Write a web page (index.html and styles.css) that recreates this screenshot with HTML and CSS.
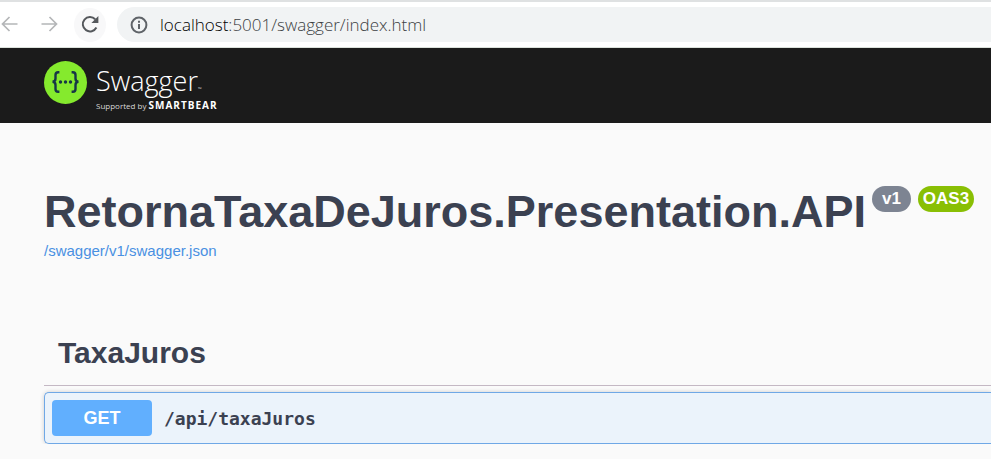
FILE: index.html
```html
<!DOCTYPE html>
<html lang="en">
<head>
<meta charset="utf-8">
<meta name="viewport" content="width=device-width, initial-scale=1">
<title>Swagger UI</title>
<link rel="stylesheet" href="styles.css">
</head>
<body>
<div class="browser-bar">
  <button class="nav-button" type="button" aria-label="Back">
    <svg width="20" height="20" viewBox="0 0 20 20" fill="none" stroke="#b4b6b8" stroke-width="1.7"><path d="M17.500 9H3M9.500 2L2.500 9l7 7"/></svg>
  </button>
  <button class="nav-button" type="button" aria-label="Forward">
    <svg width="20" height="20" viewBox="0 0 20 20" fill="none" stroke="#b4b6b8" stroke-width="1.7"><path d="M1.500 9H16M9.500 2l7 7-7 7"/></svg>
  </button>
  <button class="nav-button reload" type="button" aria-label="Reload">
    <svg width="20" height="20" viewBox="0 0 20 20"><path d="M16.400 12.500A7.200 7.200 0 1 1 15.200 4.200" fill="none" stroke="#55585c" stroke-width="2"/><path d="M18.400 1v7h-7z" fill="#55585c"/></svg>
  </button>
  <div class="address">
    <svg width="18" height="18" viewBox="0 0 18 18" aria-hidden="true"><circle cx="9" cy="9" r="7.400" fill="none" stroke="#5f6368" stroke-width="2"/><path d="M9 8v5M9 4.800v1.900" stroke="#5f6368" stroke-width="2"/></svg>
    <span class="url"><span class="host">localhost</span>:5001/swagger/index.html</span>
  </div>
</div>
<header class="topbar">
  <a class="brand" href="#" aria-label="Swagger, supported by SmartBear">
    <svg class="mark" width="44" height="44" viewBox="0 0 44 44" aria-hidden="true">
      <circle cx="21.500" cy="22.500" r="21.500" fill="#85ea2d"/>
      <g fill="none" stroke="#173647" stroke-width="2.400">
        <path d="M15.400 12.200h-1.300q-2.600 0-2.600 2.700v3.600q0 3.200-3 3.300 3 .1 3 3.300v3.800q0 2.900 2.600 2.900h1.300"/>
        <path d="M27.600 12.200h1.300q2.600 0 2.600 2.700v3.600q0 3.200 3 3.300-3 .1-3 3.300v3.800q0 2.900-2.600 2.900h-1.300"/>
      </g>
      <g fill="#173647"><circle cx="16.500" cy="22" r="1.700"/><circle cx="21.500" cy="22" r="1.700"/><circle cx="26.500" cy="22" r="1.700"/></g>
    </svg>
    <span class="wordmark">
      <span class="name">Swagger<span class="tm">™</span></span>
      <span class="support">Supported by <b>SMARTBEAR</b></span>
    </span>
  </a>
</header>
<main class="content">
  <section class="info">
    <h1>RetornaTaxaDeJuros.Presentation.API</h1>
    <div class="badges">
      <span class="badge">v1</span>
      <span class="badge oas">OAS3</span>
    </div>
  </section>
  <a class="spec-link" href="#">/swagger/v1/swagger.json</a>
  <section class="tag">
    <h2>TaxaJuros</h2>
    <button class="operation" type="button">
      <span class="method">GET</span>
      <span class="path">/api/taxaJuros</span>
    </button>
  </section>
</main>
</body>
</html>
```
FILE: styles.css
```css
* { box-sizing: border-box; }

body {
  margin: 0;
  background: #fafafa;
  color: #3b4151;
  font-family: "Liberation Sans", Arial, sans-serif;
  overflow-x: hidden;
}

button {
  border: 0;
  padding: 0;
  background: none;
  font: inherit;
  color: inherit;
}

.browser-bar {
  display: flex;
  align-items: center;
  gap: 8px;
  height: 48px;
  background: #fff;
  border-top: 2px solid #dfe1e2;
  border-bottom: 1px solid #dce2dc;
}

.nav-button {
  display: flex;
  align-items: center;
  justify-content: center;
  flex: none;
  width: 32px;
  height: 34px;
  border-radius: 50%;
}

.nav-button:first-child { width: 20px; }
.nav-button:nth-child(2) { margin-left: 6px; }
.reload { background: #f8f8f9; }

.address {
  display: flex;
  align-items: center;
  gap: 12px;
  flex: 1;
  height: 35px;
  margin-left: 3px;
  padding-left: 13px;
  background: #f1f3f4;
  border-radius: 18px 0 0 18px;
}

.url {
  font-family: "Open Sans", "Noto Sans", sans-serif;
  font-size: 17px;
  font-weight: 300;
  line-height: 24px;
  color: #3c3f43;
}

.host { color: #000; }

.topbar {
  height: 75px;
  padding: 12px 44px;
  background: #1b1b1b;
}

.brand {
  display: inline-flex;
  gap: 8px;
  color: #fff;
  text-decoration: none;
  font-family: "Open Sans", "Noto Sans", sans-serif;
}

.wordmark {
  display: flex;
  flex-direction: column;
  padding-top: 3px;
}

.name {
  font-size: 27px;
  font-weight: 300;
  line-height: 36px;
}

.tm {
  font-size: 5px;
  line-height: 1;
}

.support {
  font-size: 8px;
  line-height: 12px;
  color: #d8d8d8;
}

.support b {
  color: #fff;
  font-size: 10px;
  letter-spacing: 1px;
}

.content { padding: 62px 0 0 44px; }

.info {
  display: flex;
  align-items: flex-start;
  gap: 6px;
}

h1, h2 { margin: 0; }

h1 {
  font-size: 45px;
  line-height: 54px;
}

.badges {
  display: flex;
  gap: 7px;
  padding-top: 1px;
}

.badge {
  padding: 0 10px;
  background: #7d8492;
  border-radius: 13px;
  color: #fff;
  font-size: 17px;
  font-weight: bold;
  line-height: 26px;
}

.oas {
  padding: 0 5px;
  background: #89bf04;
}

.spec-link {
  display: block;
  margin-top: 2px;
  font-size: 15px;
  line-height: 20px;
  color: #4990e2;
  text-decoration: none;
}

.tag { margin-top: 68px; }

h2 {
  padding: 6px 14px 14px;
  border-bottom: 1px solid #c4b8c4;
  font-size: 30px;
  line-height: 36px;
}

.operation {
  display: flex;
  align-items: center;
  gap: 12px;
  width: 100%;
  margin-top: 6px;
  padding: 7px;
  background: #ebf3fb;
  border: 1px solid #6fa8e6;
  border-right: 0;
  border-radius: 5px 0 0 5px;
  box-shadow: 0 0 4px rgba(0, 0, 0, 0.19);
}

.method {
  width: 100px;
  background: #61affe;
  border-radius: 4px;
  color: #fff;
  font-size: 18px;
  font-weight: bold;
  line-height: 36px;
  text-align: center;
}

.path {
  font-family: "DejaVu Sans Mono", monospace;
  font-size: 18px;
  font-weight: bold;
}
```
